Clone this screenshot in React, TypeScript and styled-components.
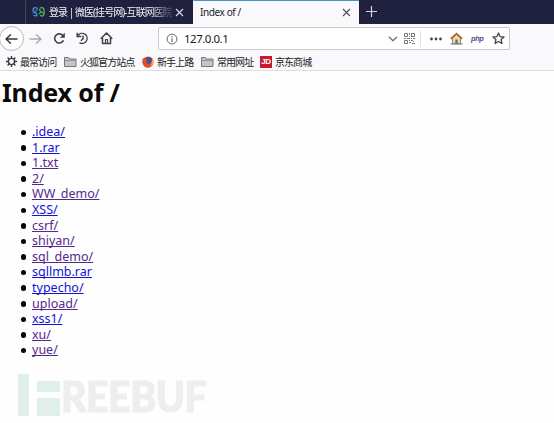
import React from 'react';
import styled, { createGlobalStyle } from 'styled-components';

const Global = createGlobalStyle`
  * { box-sizing: border-box; }
  body { margin: 0; background: #fefefe; overflow: hidden; font-family: "Noto Sans", "Noto Sans CJK SC", sans-serif; }
  svg { display: block; flex: none; }
`;

const Window = styled.div`
  width: 554px;
  height: 423px;
  position: relative;
  overflow: hidden;
`;

const TabBar = styled.div`
  display: flex;
  height: 24px;
  background: #20213f;
  padding-left: 25px;
`;

const Tab = styled.div<{ $active?: boolean; $width: number }>`
  display: flex;
  align-items: center;
  width: ${p => p.$width}px;
  height: 24px;
  padding: 0 ${p => (p.$active ? 8 : 9)}px 1px 6px;
  border-left: 1px solid ${p => (p.$active ? '#f9f9fb' : '#44455f')};
  border-top: 1px solid ${p => (p.$active ? '#4a94c4' : '#20213f')};
  background: ${p => (p.$active ? '#f9f9fb' : '#20213f')};
  color: ${p => (p.$active ? '#222226' : '#f2f2f6')};
`;

const TabTitle = styled.span<{ $fade?: boolean; $spacing: number }>`
  flex: 1;
  min-width: 0;
  white-space: nowrap;
  font-size: 10px;
  line-height: 20px;
  letter-spacing: ${p => p.$spacing}px;
  ${p => p.$fade && 'margin-left: 4px; margin-right: 3px; mask-image: linear-gradient(90deg, #000 82%, rgba(0, 0, 0, 0.15) 100%);'}
`;

const NewTab = styled.div`
  display: flex;
  align-items: center;
  padding: 0 0 2px 7px;
`;

const Toolbar = styled.div`
  display: flex;
  align-items: center;
  height: 29px;
  background: #f9f9fb;
`;

const BackButton = styled.div`
  display: flex;
  align-items: center;
  justify-content: center;
  width: 25px;
  height: 25px;
  margin-left: -1px;
  border: 1px solid #b9b9bd;
  border-radius: 50%;
  background: #fefefe;
`;

const NavIcons = styled.div`
  display: flex;
  align-items: center;
  gap: 10.7px;
  padding-left: 5px;
  width: 134px;
`;

const UrlBar = styled.div`
  display: flex;
  align-items: center;
  width: 352px;
  height: 23px;
  padding: 0 4px 0 7px;
  border: 1px solid #c9c9cd;
  border-radius: 2px;
  background: #fff;
`;

const Address = styled.span`
  flex: 1;
  padding-left: 6px;
  font-size: 11.5px;
  line-height: 20px;
  letter-spacing: -0.5px;
  color: #18181a;
`;

const PageActions = styled.div`
  display: flex;
  align-items: center;
  gap: 6px;
`;

const Separator = styled.i`
  width: 1px;
  height: 16px;
  margin: 0 9px 0 5px;
  background: #e2e2e5;
`;

const SiteTools = styled.div`
  display: flex;
  align-items: center;
  gap: 8px;
`;

const PhpLabel = styled.span`
  width: 13px;
  font: italic 700 7.5px/12px "Liberation Sans", sans-serif;
  letter-spacing: -0.4px;
  color: #54508e;
`;

const Bookmarks = styled.div`
  display: flex;
  align-items: center;
  height: 17px;
  padding-left: 6px;
  background: #f9f9fb;
`;

const BookmarksEdge = styled.div`
  height: 1px;
  background: #dedee1;
`;

const Bookmark = styled.div<{ $width: number }>`
  display: flex;
  align-items: center;
  gap: 3px;
  width: ${p => p.$width}px;
  font-size: 10px;
  line-height: 16px;
  letter-spacing: -0.95px;
  white-space: nowrap;
  color: #202023;
`;

const JdBadge = styled.b`
  width: 12px;
  height: 12px;
  flex: none;
  background: #c81a2d;
  color: #fff;
  text-align: center;
  font: 700 8px/12px "Liberation Sans", sans-serif;
  letter-spacing: -0.4px;
`;

const Page = styled.main`
  padding: 4px 2px 0;
`;

const Heading = styled.h1`
  margin: 0;
  font-size: 25px;
  line-height: 34px;
  font-weight: 700;
  letter-spacing: -0.15px;
  color: #0a0a0a;
`;

const FileList = styled.ul`
  list-style: none;
  margin: 15px 0 0;
  padding: 0 0 0 17px;
`;

const FileItem = styled.li`
  display: flex;
  align-items: center;
  height: 15.6px;
  &::before {
    content: '';
    width: 5.5px;
    height: 5.5px;
    margin: 1px 6px 0 1.5px;
    border-radius: 50%;
    background: #050505;
  }
`;

const FileLink = styled.a<{ $visited: boolean }>`
  font-size: 12.5px;
  line-height: 15.6px;
  color: ${p => (p.$visited ? '#55298b' : '#1313d4')};
  text-decoration: underline;
  text-decoration-thickness: 1px;
  text-decoration-skip-ink: none;
  text-underline-offset: 1px;
`;

const Watermark = styled.div`
  position: absolute;
  left: 18px;
  top: 374px;
  display: flex;
  height: 44px;
`;

const WatermarkText = styled.span`
  font: 900 42px/44px Lato, sans-serif;
  letter-spacing: -0.5px;
  color: #efedf0;
  -webkit-text-stroke: 1.2px #efedf0;
  transform: scaleX(0.935);
  transform-origin: left;
`;

const Close = ({ color }: { color: string }) => (
  <svg width="9" height="9" viewBox="0 0 9 9" stroke={color} strokeWidth="1.1"><path d="M1 1l7 7M8 1L1 8" /></svg>
);

const Arrow = ({ color, flip }: { color: string; flip?: boolean }) => (
  <svg width="13" height="12" viewBox="0 0 13 12" fill="none" stroke={color} strokeWidth="1.4" strokeLinecap="round" strokeLinejoin="round">
    <path d={flip ? 'M1 6h11M7.5 1.8L12 6l-4.500 4.200' : 'M12 6H1M5.500 1.800L1 6l4.500 4.200'} />
  </svg>
);

const Folder = () => (
  <svg width="13" height="12" viewBox="0 0 13 12" fill="#c5c5c7" stroke="#77777b">
    <path d="M.5 10.500v-9h4l1 1.500h6.500v7.500z" /><path d="M1 4.500h11" stroke="#929296" />
  </svg>
);

const Logo = () => (
  <svg width="13" height="12" viewBox="0 0 13 12" fill="none" strokeWidth="1.3" strokeLinecap="round">
    <path d="M4.800 2C3 1 1 2 1 4s2 2.500 3.500 3.500C6 9 4 10.500 2 9.500" stroke="#3c9fd8" />
    <path d="M1 7C1.300 5.500 5.500 5.500 5.500 2.500" stroke="#4169c8" />
    <path d="M8.200 2C10 1 12 2 12 4v4c0 2-2.500 2.500-3.500 1.500" stroke="#57b53b" />
    <path d="M7.500 3.500c0 2 4 2.500 4 4.500M7.500 7.500L9 6" stroke="#3eaa63" />
  </svg>
);

const Reload = () => (
  <svg width="13" height="13" viewBox="0 0 13 13" fill="none" stroke="#414145" strokeWidth="1.6">
    <path d="M10.500 8.200A4.600 4.600 0 1 1 9.800 3.500" /><path d="M11.800.8v4.900H6.900z" fill="#414145" stroke="none" />
  </svg>
);

const History = () => (
  <svg width="13" height="13" viewBox="0 0 13 13" fill="none" stroke="#414145" strokeWidth="1.4">
    <path d="M2 3.500A5 5 0 1 1 3.500 10.600M1.200.8v3.700h4M7 3.500v3.400L4.800 8.700" />
  </svg>
);

const Home = () => (
  <svg width="13" height="13" viewBox="0 0 13 13" fill="none" stroke="#414145" strokeWidth="1.5" strokeLinejoin="round">
    <path d="M.8 6.700L6.500 1l5.700 5.700M2.500 6v5.500h8V6" /><path d="M5.500 11V7.500h2V11" strokeWidth="1.200" />
  </svg>
);

const Info = () => (
  <svg width="12" height="12" viewBox="0 0 12 12" fill="none" stroke="#69696d">
    <circle cx="6" cy="6" r="4.900" /><path d="M6 5.300V9M6 3v1.200" strokeWidth="1.200" />
  </svg>
);

const Chevron = () => (
  <svg width="10" height="8" viewBox="0 0 10 8" fill="none" stroke="#77777b" strokeWidth="1.300"><path d="M1 1.800l4 4 4-4" /></svg>
);

const QrCode = () => (
  <svg width="11" height="11" viewBox="0 0 11 11" fill="none" stroke="#77777b">
    <path d="M.5.5h3v3h-3zM7.500.5h3v3h-3zM.5 7.500h3v3h-3z" />
    <path d="M5.500 0v2M5 3.500h1M0 5.500h2M3 5.500h3M7 5.500h1M9 5.500h2M5.500 7v1M5 9.500h2M7 7.500h2M9.500 8v1M8 10.500h3" />
  </svg>
);

const Dots = () => (
  <svg width="12" height="4" viewBox="0 0 12 4" fill="#454549">
    <circle cx="1.500" cy="2" r="1.400" /><circle cx="6" cy="2" r="1.400" /><circle cx="10.500" cy="2" r="1.400" />
  </svg>
);

const ColorHome = () => (
  <svg width="13" height="13" viewBox="0 0 13 13">
    <path d="M2.500 6L6.500 2.500 10.500 6v5.500h-8z" fill="#efd8a9" stroke="#87714e" strokeWidth=".8" />
    <path d="M.8 6.800l5.700-5 5.700 5" fill="none" stroke="#a57538" strokeWidth="1.800" />
    <path d="M5.300 7.500h2.400v4H5.300z" fill="#6b6f84" /><path d="M.5 12h12" stroke="#69877d" strokeWidth="1.200" />
  </svg>
);

const Star = () => (
  <svg width="13" height="13" viewBox="0 0 13 13" fill="none" stroke="#434347" strokeWidth="1.300" strokeLinejoin="round">
    <path d="M6.500 1l1.600 3.600 3.900.4-2.900 2.600.8 3.900-3.400-2-3.400 2 .8-3.900L1 5l3.900-.4z" />
  </svg>
);

const Gear = () => (
  <svg width="11" height="11" viewBox="0 0 11 11" fill="none" stroke="#3b3b3f">
    <circle cx="5.500" cy="5.500" r="3.100" strokeWidth="1.400" />
    <path d="M5.500 0v2M5.500 9v2M0 5.500h2M9 5.500h2M1.600 1.600L3 3M8 8l1.400 1.400M9.400 1.600L8 3M3 8L1.600 9.400" strokeWidth="1.400" />
  </svg>
);

const Firefox = () => (
  <svg width="12" height="12" viewBox="0 0 12 12">
    <circle cx="6" cy="6" r="5.500" fill="#e5482d" /><circle cx="6.700" cy="4.800" r="3.500" fill="#34549f" />
    <path d="M1 2c1 .6 2 .9 3 1.300L5.500 5 4.300 6.300C5.500 8.500 8.500 8 9.500 5.800L10 2c3 4 .7 9.300-4 9.500C1.500 11.300-.5 7 1 2z" fill="#e04a2b" />
    <path d="M10 2.200c2.300 3.500.8 7.500-2.500 8.500 2-1.700 2.500-4 2.500-8.500z" fill="#f8bf34" />
  </svg>
);

const files: [string, boolean][] = [
  ['.idea/', false], ['1.rar', false], ['1.txt', true], ['2/', true], ['WW_demo/', true],
  ['XSS/', false], ['csrf/', true], ['shiyan/', true], ['sql_demo/', true], ['sqllmb.rar', false],
  ['typecho/', false], ['upload/', true], ['xss1/', false], ['xu/', true], ['yue/', true],
];

export default function App() {
  return (
    <Window>
      <Global />
      <TabBar>
        <Tab $width={168}>
          <Logo />
          <TabTitle $fade $spacing={-0.95}>登录 | 微医(挂号网)-互联网医院</TabTitle>
          <Close color="#dcdce6" />
        </Tab>
        <Tab $active $width={166}>
          <TabTitle $spacing={-0.4}>Index of /</TabTitle>
          <Close color="#4b4b4f" />
        </Tab>
        <NewTab>
          <svg width="11" height="11" viewBox="0 0 11 11" stroke="#d5d5e0" strokeWidth="1.200"><path d="M5.500 0v11M0 5.500h11" /></svg>
        </NewTab>
      </TabBar>
      <Toolbar>
        <BackButton><Arrow color="#343438" /></BackButton>
        <NavIcons>
          <Arrow color="#aaaaae" flip />
          <Reload />
          <History />
          <Home />
        </NavIcons>
        <UrlBar>
          <Info />
          <Address>127.0.0.1</Address>
          <PageActions>
            <Chevron />
            <QrCode />
          </PageActions>
          <Separator />
          <SiteTools>
            <Dots />
            <ColorHome />
            <PhpLabel>php</PhpLabel>
            <Star />
          </SiteTools>
        </UrlBar>
      </Toolbar>
      <Bookmarks>
        <Bookmark $width={58}><Gear />最常访问</Bookmark>
        <Bookmark $width={78}><Folder />火狐官方站点</Bookmark>
        <Bookmark $width={59}><Firefox />新手上路</Bookmark>
        <Bookmark $width={59}><Folder />常用网址</Bookmark>
        <Bookmark $width={60}><JdBadge>JD</JdBadge>京东商城</Bookmark>
      </Bookmarks>
      <BookmarksEdge />
      <Page>
        <Heading>Index of /</Heading>
        <FileList>
          {files.map(([name, visited]) => (
            <FileItem key={name}><FileLink $visited={visited}>{name}</FileLink></FileItem>
          ))}
        </FileList>
      </Page>
      <Watermark>
        <svg width="43" height="44" viewBox="0 0 43 44" fill="#e1efe9"><path d="M0 0h11v42H0zM19 7h23v11H19zM19 24h23v18H19z" /></svg>
        <WatermarkText>REEBUF</WatermarkText>
      </Watermark>
    </Window>
  );
}
